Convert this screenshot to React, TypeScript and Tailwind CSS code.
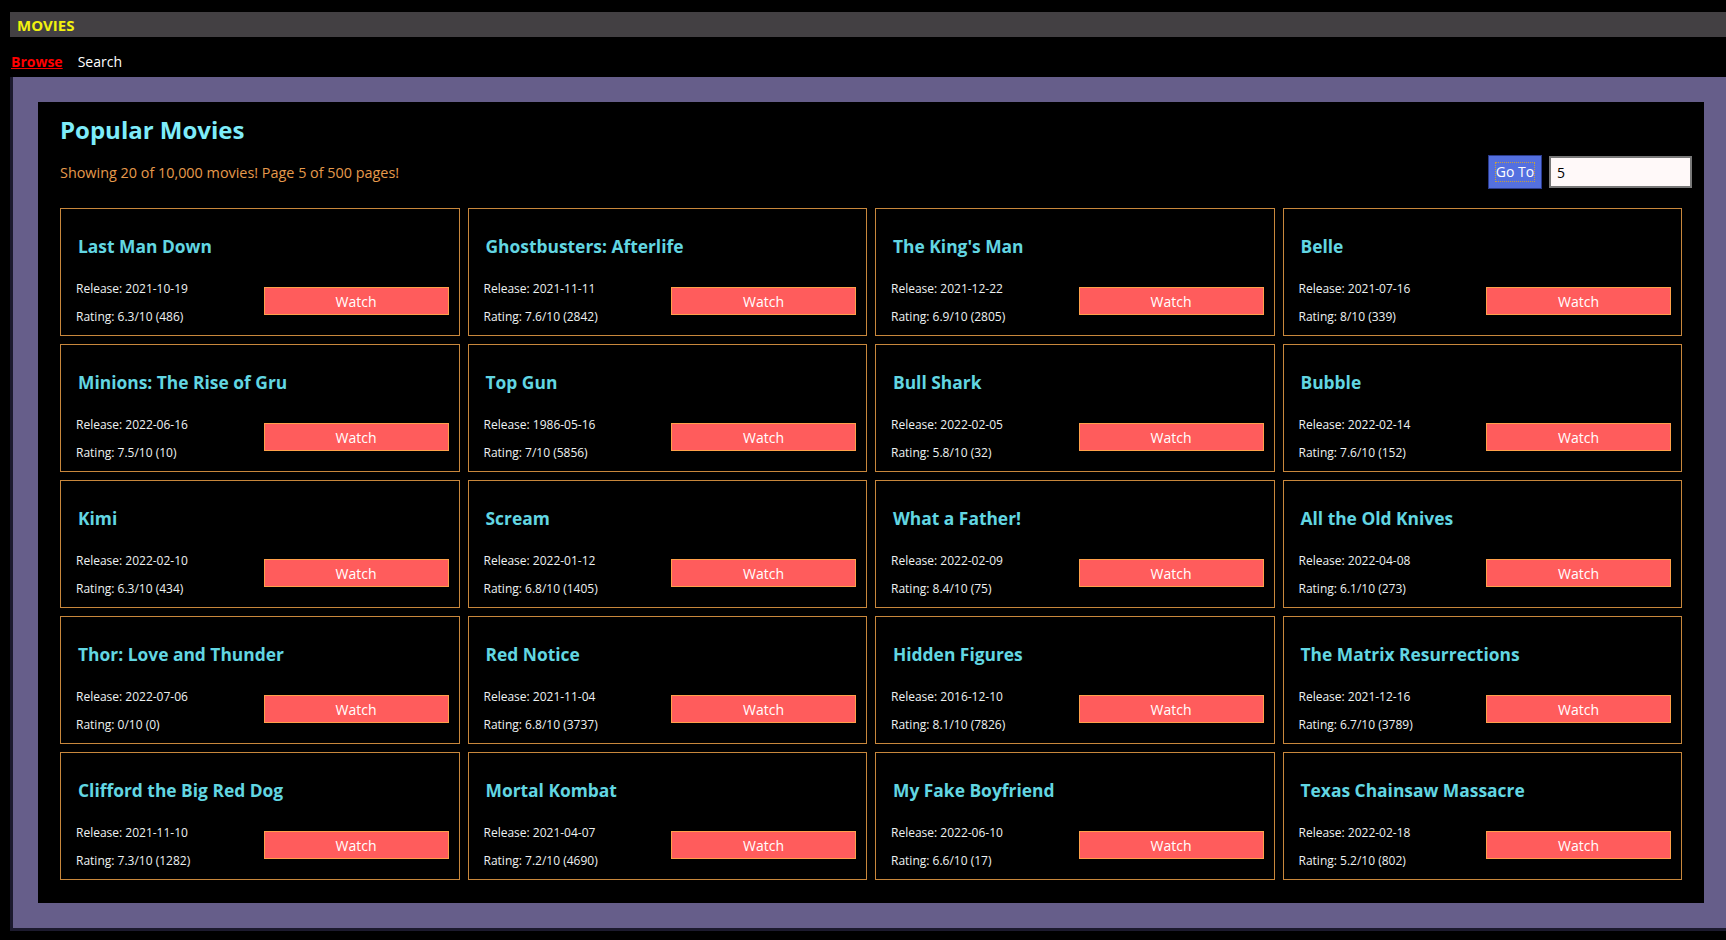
const movies = [
  { title: "Last Man Down", release: "2021-10-19", rating: "6.3/10 (486)" },
  { title: "Ghostbusters: Afterlife", release: "2021-11-11", rating: "7.6/10 (2842)" },
  { title: "The King's Man", release: "2021-12-22", rating: "6.9/10 (2805)" },
  { title: "Belle", release: "2021-07-16", rating: "8/10 (339)" },
  { title: "Minions: The Rise of Gru", release: "2022-06-16", rating: "7.5/10 (10)" },
  { title: "Top Gun", release: "1986-05-16", rating: "7/10 (5856)" },
  { title: "Bull Shark", release: "2022-02-05", rating: "5.8/10 (32)" },
  { title: "Bubble", release: "2022-02-14", rating: "7.6/10 (152)" },
  { title: "Kimi", release: "2022-02-10", rating: "6.3/10 (434)" },
  { title: "Scream", release: "2022-01-12", rating: "6.8/10 (1405)" },
  { title: "What a Father!", release: "2022-02-09", rating: "8.4/10 (75)" },
  { title: "All the Old Knives", release: "2022-04-08", rating: "6.1/10 (273)" },
  { title: "Thor: Love and Thunder", release: "2022-07-06", rating: "0/10 (0)" },
  { title: "Red Notice", release: "2021-11-04", rating: "6.8/10 (3737)" },
  { title: "Hidden Figures", release: "2016-12-10", rating: "8.1/10 (7826)" },
  { title: "The Matrix Resurrections", release: "2021-12-16", rating: "6.7/10 (3789)" },
  { title: "Clifford the Big Red Dog", release: "2021-11-10", rating: "7.3/10 (1282)" },
  { title: "Mortal Kombat", release: "2021-04-07", rating: "7.2/10 (4690)" },
  { title: "My Fake Boyfriend", release: "2022-06-10", rating: "6.6/10 (17)" },
  { title: "Texas Chainsaw Massacre", release: "2022-02-18", rating: "5.2/10 (802)" },
];

function MovieCard({ movie }: { movie: (typeof movies)[number] }) {
  return (
    <div className="h-[128px] border border-[#c8873c] pt-[25px]">
      <h3 className="pl-[17px] text-[17.4px] leading-[24px] font-bold text-[#62d6e2]">
        {movie.title}
      </h3>
      <div className="mt-[15px] flex items-start justify-between pl-[15px] pr-[10px]">
        <div className="pt-[2px] text-[12px] leading-[28px] text-[#eef2f2]">
          <div>Release: {movie.release}</div>
          <div>Rating: {movie.rating}</div>
        </div>
        <button className="mt-[14px] h-[28px] w-[185px] border border-[#ffa04a] bg-[#ff5c5c] text-[14px] text-white">
          Watch
        </button>
      </div>
    </div>
  );
}

export default function App() {
  return (
    <div
      className="min-h-screen overflow-hidden bg-black pt-[12px] pb-[9px]"
      style={{ fontFamily: '"Open Sans", "Noto Sans", sans-serif' }}
    >
      <div className="ml-[10px] flex h-[25px] items-center bg-[#434043] pl-[7px] pt-[1px]">
        <span className="text-[15px] font-bold text-[#f2f20e]">MOVIES</span>
      </div>

      <nav className="flex h-[40px] items-center gap-[15px] pl-[11px] pt-[8px] text-[14px]">
        <a className="font-bold text-[#ff0000] underline">Browse</a>
        <a className="text-white">Search</a>
      </nav>

      <div className="ml-[10px] border-b-[3px] border-l-[3px] border-[#1c1a2e] bg-[#665e8a] pb-[25px] pl-[25px] pr-[22px] pt-[25px]">
        <div className="bg-black pb-[23px] pl-[22px] pr-[12px] pt-[13px]">
          <h2 className="text-[24px] leading-[30px] font-bold text-[#7eecfa]">Popular Movies</h2>

          <div className="mt-[10px] flex h-[34px] items-center justify-between">
            <p className="pt-[1px] text-[14.4px] text-[#e69a4c]">
              Showing 20 of 10,000 movies! Page 5 of 500 pages!
            </p>
            <div className="flex items-center gap-[7px]">
              <button className="flex h-[34px] w-[54px] items-center justify-center border border-[#2b3b8c] bg-[#5470e0] text-[14px] text-white">
                <span className="outline-1 outline-dotted outline-[#c8a040] leading-[18px]">Go To</span>
              </button>
              <input
                defaultValue="5"
                className="h-[32px] w-[143px] border-2 border-[#787878] bg-[#fff9f9] px-[6px] text-[14px] text-black outline-none"
              />
            </div>
          </div>

          <div className="mr-[10px] mt-[19px] grid grid-cols-4 gap-[8px]">
            {movies.map((m) => (
              <MovieCard key={m.title} movie={m} />
            ))}
          </div>
        </div>
      </div>
    </div>
  );
}
